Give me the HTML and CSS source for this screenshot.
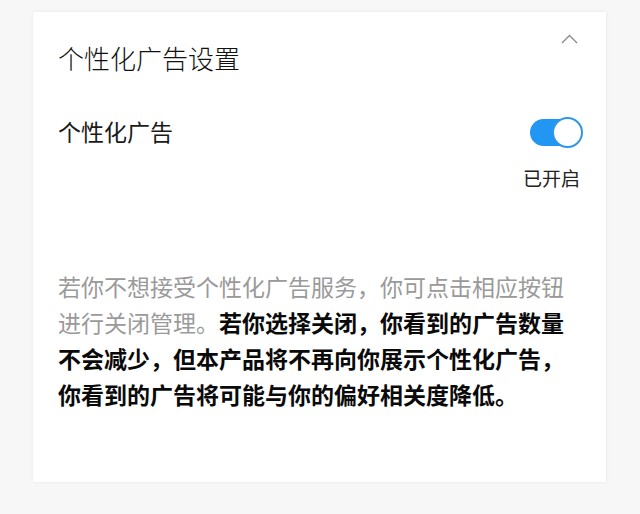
FILE: index.html
```html
<!DOCTYPE html>
<html lang="zh-CN">
<head>
<meta charset="utf-8">
<link rel="stylesheet" href="styles.css">
</head>
<body>
<div class="card">
  <div class="header">
    <div class="title">个性化广告设置</div>
    <svg class="chevron" width="17" height="10" viewBox="0 0 17 10"><path d="M1 9 L8.5 1.5 L16 9" fill="none" stroke="#8a8a8a" stroke-width="1.3"/></svg>
  </div>
  <div class="row">
    <div class="label">个性化广告</div>
    <div class="control">
      <div class="switch"><div class="track"></div><div class="knob"></div></div>
      <div class="state">已开启</div>
    </div>
  </div>
  <p class="desc"><span class="muted">若你不想接受个性化广告服务，你可点击相应按钮进行关闭管理。</span><span class="strong">若你选择关闭，你看到的广告数量不会减少，但本产品将不再向你展示个性化广告，你看到的广告将可能与你的偏好相关度降低。</span></p>
</div>
</body>
</html>
```

FILE: styles.css
```css
html, body { margin: 0; padding: 0; }
body {
  background: #f7f7f7;
  width: 640px;
  height: 514px;
  overflow: hidden;
  font-family: "Noto Sans CJK SC", "Noto Sans", sans-serif;
  padding: 12px 0 0 33px;
  box-sizing: border-box;
}
.card {
  width: 573px;
  height: 470px;
  background: #fff;
  box-shadow: 0 0 3px rgba(0,0,0,0.08);
  padding: 20px 23px 0 25px;
  box-sizing: border-box;
}
.header {
  display: flex;
  justify-content: space-between;
  align-items: flex-start;
}
.title {
  margin-top: 8px;
  font-size: 26px;
  line-height: 36px;
  color: #111;
  font-weight: 300;
}
.chevron {
  margin-top: 2px;
  margin-right: 5px;
  display: block;
}
.row {
  display: flex;
  justify-content: space-between;
  align-items: flex-start;
  margin-top: 39px;
}
.label {
  font-size: 23px;
  line-height: 32px;
  color: #1a1a1a;
}
.control {
  display: flex;
  flex-direction: column;
  align-items: flex-end;
  padding-top: 2px;
}
.switch {
  position: relative;
  width: 53px;
  height: 31px;
}
.track {
  width: 48px;
  height: 27px;
  margin-top: 2px;
  border-radius: 14px;
  background: #2196f3;
}
.knob {
  position: absolute;
  right: 0;
  top: 0;
  width: 27px;
  height: 27px;
  border-radius: 50%;
  background: #fff;
  border: 2px solid #2f97e8;
}
.state {
  margin-top: 17px;
  margin-right: 3px;
  font-size: 19px;
  line-height: 26px;
  color: #222;
}
.desc {
  margin: 77px 0 0 0;
  width: 512px;
  font-size: 23px;
  line-height: 36px;
}
.muted { color: #9a9a9a; }
.strong { color: #0a0a0a; font-weight: 700; }
```
